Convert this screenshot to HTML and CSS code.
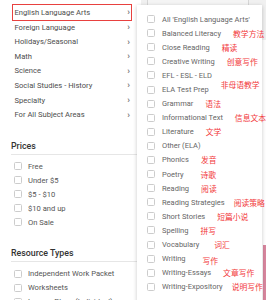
FILE: index.html
```html
<!doctype html>
<html>
<head>
    <meta charset="utf-8"/>
    <title>Filters</title>
    <link rel="stylesheet" href="styles.css">
</head>
<body>
    <div class="layout">
        <aside class="sidebar">
            <ul class="subjects">
                <li class="subject active">English Language Arts<span class="chev">&#8250;</span></li>
                <li class="subject">Foreign Language<span class="chev">&#8250;</span></li>
                <li class="subject">Holidays/Seasonal<span class="chev">&#8250;</span></li>
                <li class="subject">Math<span class="chev">&#8250;</span></li>
                <li class="subject">Science<span class="chev">&#8250;</span></li>
                <li class="subject">Social Studies - History<span class="chev">&#8250;</span></li>
                <li class="subject">Specialty<span class="chev">&#8250;</span></li>
                <li class="subject">For All Subject Areas<span class="chev">&#8250;</span></li>
            </ul>

            <section class="filter">
                <h3>Prices</h3>
                <ul class="checks">
                    <li><span class="box"></span>Free</li>
                    <li><span class="box"></span>Under $5</li>
                    <li><span class="box"></span>$5 - $10</li>
                    <li><span class="box"></span>$10 and up</li>
                    <li><span class="box"></span>On Sale</li>
                </ul>
            </section>

            <section class="filter">
                <h3>Resource Types</h3>
                <ul class="checks">
                    <li><span class="box"></span>Independent Work Packet</li>
                    <li><span class="box"></span>Worksheets</li>
                    <li><span class="box"></span>Lesson Plans (Individual)</li>
                </ul>
            </section>
        </aside>

        <main class="results">
            <div class="results-top"><div class="card"></div></div>
            <div class="results-edge"></div>
        </main>
    </div>

    <div class="flyout">
        <ul class="checks sub">
            <li><span class="box"></span>All 'English Language Arts'</li>
            <li><span class="box"></span>Balanced Literacy<span class="note">教学方法</span></li>
            <li><span class="box"></span>Close Reading<span class="note">精读</span></li>
            <li><span class="box"></span>Creative Writing<span class="note">创意写作</span></li>
            <li><span class="box"></span>EFL - ESL - ELD</li>
            <li><span class="box"></span>ELA Test Prep<span class="note up">非母语教学</span></li>
            <li><span class="box"></span>Grammar<span class="note">语法</span></li>
            <li><span class="box"></span>Informational Text<span class="note">信息文本</span></li>
            <li><span class="box"></span>Literature<span class="note">文学</span></li>
            <li><span class="box"></span>Other (ELA)</li>
            <li><span class="box"></span>Phonics<span class="note">发音</span></li>
            <li><span class="box"></span>Poetry<span class="note far">诗歌</span></li>
            <li><span class="box"></span>Reading<span class="note">阅读</span></li>
            <li><span class="box"></span>Reading Strategies<span class="note near">阅读策略</span></li>
            <li><span class="box"></span>Short Stories<span class="note">短篇小说</span></li>
            <li><span class="box"></span>Spelling<span class="note">拼写</span></li>
            <li><span class="box"></span>Vocabulary<span class="note mid">词汇</span></li>
            <li><span class="box"></span>Writing<span class="note far down">写作</span></li>
            <li><span class="box"></span>Writing-Essays<span class="note">文章写作</span></li>
            <li><span class="box"></span>Writing-Expository<span class="note near">说明写作</span></li>
        </ul>
    </div>
</body>
</html>
```

FILE: styles.css
```css
html {
    font-family:Roboto,"Liberation Sans",Arial,sans-serif;
}
body {
    margin:0;
    background:#ffffff;
}

* {
    box-sizing:border-box;
}
ul {
    list-style:none;
    margin:0;
    padding:0;
}

.layout { display:flex; }

/* left column */
.sidebar {
    width:141px;
    flex:none;
    padding:5.2px 0 0 11px;
}
.subject {
    position:relative;
    display:flex;
    align-items:center;
    justify-content:space-between;
    width:120px;
    height:14.6px;
    margin-left:1px;
    padding:0 2px 0 2.5px;
    font-size:7.6px;
    color:#4d4d4d;
    white-space:nowrap;
}
.subject.active::after {
    content:"";
    position:absolute;
    left:0;
    right:0;
    top:-1.5px;
    bottom:-1.5px;
    border:1.5px solid #e8413f;
}
.chev {
    color:#777777;
    font-size:9px;
    font-weight:700;
}

.filter { margin-top:18px; }
.filter h3 {
    margin:0;
    padding-bottom:2px;
    line-height:12px;
    font-size:8.8px;
    font-weight:500;
    color:#333333;
    border-bottom:1px solid #e6e6e6;
}
.filter .checks { margin-top:4.5px; }

.checks li {
    display:flex;
    align-items:center;
    gap:6px;
    height:14px;
    padding-left:3px;
    font-size:7.6px;
    color:#555555;
    white-space:nowrap;
}
.box {
    width:8px;
    height:8px;
    flex:none;
    border:1px solid #cccccc;
    border-radius:1.5px;
    background:#ffffff;
}

/* page behind the flyout */
.results {
    flex:1;
    height:300px;
    display:flex;
    flex-direction:column;
    align-items:flex-end;
}
.results-top {
    width:100%;
    height:40px;
    padding-left:6px;
    background:#f0f0f0;
}
.card {
    width:102px;
    height:100%;
    border-left:1px solid #d6d6d6;
    border-right:1px solid #d6d6d6;
    background:#f4f4f4;
}
.results-edge {
    width:3px;
    height:55px;
    margin-top:auto;
    background:#d9879f;
}

/* subject flyout */
.flyout {
    position:absolute;
    left:137px;
    top:5px;
    width:125px;
    height:300px;
    padding:7px 0 0 7px;
    background:#ffffff;
    box-shadow:0 1px 4px rgba(0,0,0,.22);
}
.sub li {
    height:14.1px;
    gap:7px;
    font-size:7.5px;
    color:#666666;
}
.note {
    margin-left:5px;
    font-family:"Noto Sans CJK SC",sans-serif;
    font-size:7.8px;
    color:#f2383a;
}
.note.near { margin-left:2px; }
.note.mid { margin-left:8px; }
.note.far { margin-left:10px; }
.note.up { position:relative; top:-5px; }
.note.down { position:relative; top:2px; }
```
